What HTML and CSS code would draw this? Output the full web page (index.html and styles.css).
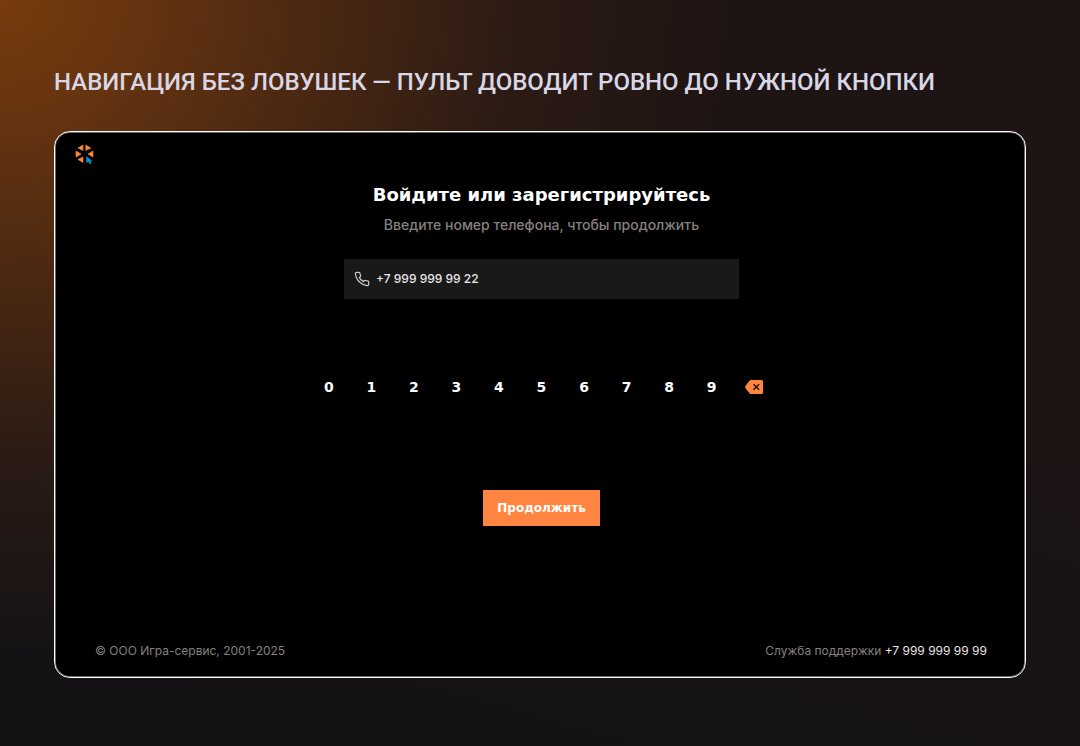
FILE: index.html
```html
<!DOCTYPE html>
<html lang="ru">
<head>
<meta charset="utf-8">
<meta name="viewport" content="width=device-width, initial-scale=1">
<title>Вход по номеру телефона</title>
<link rel="stylesheet" href="styles.css">
</head>
<body class="page">
<h1 class="page-title">Навигация без ловушек — пульт доводит ровно до нужной кнопки</h1>
<main class="screen">
  <header class="screen-header">
    <svg class="logo" viewBox="0 0 20 20" aria-hidden="true">
      <g fill="#ff8540" stroke="#ff8540" stroke-width=".6" stroke-linejoin="round">
        <path d="M3 4 8 1v5.500z"/>
        <path d="M10.800 1l5 3-5 2.500z"/>
        <path d="M1 7l5 3-5 3z"/>
        <path d="M18 7v6l-5-3z"/>
        <path d="M3 15.500 8 13V18.500z"/>
      </g>
      <path fill="#0793ca" d="M11.300 12 17.200 17l-1.700.500 1 2-1.900.500-.8-2-2.500.800z"/>
    </svg>
  </header>
  <form class="login">
    <h2 class="login-title">Войдите или зарегистрируйтесь</h2>
    <label class="login-hint" for="phone">Введите номер телефона, чтобы продолжить</label>
    <div class="phone-field">
      <svg class="phone-icon" viewBox="0 0 24 24" aria-hidden="true">
        <path d="M22 16.920v3a2 2 0 0 1-2.180 2 19.800 19.800 0 0 1-8.630-3.070 19.500 19.500 0 0 1-6-6A19.800 19.800 0 0 1 2.120 4.180 2 2 0 0 1 4.110 2h3a2 2 0 0 1 2 1.720c.13.960.36 1.900.7 2.810a2 2 0 0 1-.45 2.110L8.090 9.910a16 16 0 0 0 6 6l1.270-1.270a2 2 0 0 1 2.110-.45c.91.340 1.850.570 2.810.7A2 2 0 0 1 22 16.920z"/>
      </svg>
      <input class="phone-input" id="phone" type="tel" value="+7 999 999 99 22">
    </div>
    <div class="keypad">
      <button class="key" type="button">0</button>
      <button class="key" type="button">1</button>
      <button class="key" type="button">2</button>
      <button class="key" type="button">3</button>
      <button class="key" type="button">4</button>
      <button class="key" type="button">5</button>
      <button class="key" type="button">6</button>
      <button class="key" type="button">7</button>
      <button class="key" type="button">8</button>
      <button class="key" type="button">9</button>
      <button class="key" type="button" aria-label="Стереть">
        <svg class="erase-icon" viewBox="0 0 18 14" aria-hidden="true">
          <path fill="#ff8540" d="M6 0h10.500A1.500 1.500 0 0 1 18 1.500v11a1.500 1.500 0 0 1-1.500 1.500H6q-.8 0-1.300-.6L.4 8Q-.2 7 .4 6L4.700.6Q5.200 0 6 0z"/>
          <path stroke="#211008" stroke-width="1.400" d="m8.500 4.200 5.600 5.600m0-5.600L8.500 9.800"/>
        </svg>
      </button>
    </div>
    <button class="submit" type="submit">Продолжить</button>
  </form>
  <footer class="screen-footer">
    <span>© ООО Игра-сервис, 2001-2025</span>
    <span>Служба поддержки <a class="support-phone" href="tel:+79999999999">+7 999 999 99 99</a></span>
  </footer>
</main>
</body>
</html>
```
FILE: styles.css
```css
* {
  box-sizing: border-box;
}

.page {
  margin: 0;
  min-height: 100vh;
  padding: 64px 54px 68px;
  display: flex;
  flex-direction: column;
  gap: 31px;
  font-family: Inter, "Noto Sans", sans-serif;
  background:
    radial-gradient(ellipse 68% 88% at 0 0, #763c0e 0%, #643310 20%, #482712 45%, rgba(50, 30, 21, 0.7) 70%, rgba(30, 20, 19, 0) 100%),
    linear-gradient(15deg, #131214 0%, #171314 30%, #1e1413 65%, #1e1413 100%);
}

.page-title {
  margin: 0;
  font-family: Roboto, sans-serif;
  font-size: 24px;
  line-height: 36px;
  font-weight: 500;
  text-transform: uppercase;
  color: #d9d7e5;
}

.screen {
  flex: 1;
  display: flex;
  flex-direction: column;
  padding: 12px 20px 16px;
  border: 1px solid #fff;
  border-radius: 16px;
  box-shadow: inset 0 0 0 1px #666;
  background: #000;
}

.logo {
  display: block;
  width: 20px;
  height: 20px;
}

.login {
  flex: 1;
  display: flex;
  flex-direction: column;
  align-items: center;
  padding: 19px 0 0 3px;
}

.login-title {
  margin: 0;
  font: bold 18px/24px "DejaVu Sans", sans-serif;
  color: #fff;
}

.login-hint {
  margin-top: 8px;
  font-size: 14px;
  line-height: 20px;
  font-weight: 500;
  color: #85807e;
}

.phone-field {
  display: flex;
  align-items: center;
  gap: 6px;
  width: 395px;
  max-width: 100%;
  height: 40px;
  margin-top: 24px;
  padding: 0 10px;
  background: #191919;
}

.phone-icon {
  width: 16px;
  height: 16px;
  fill: none;
  stroke: #cfcbca;
  stroke-width: 1.8;
}

.phone-input {
  flex: 1;
  min-width: 0;
  padding: 0;
  border: 0;
  background: none;
  font: 500 12px/16px Inter, sans-serif;
  color: #e9e5e5;
}

.keypad {
  display: grid;
  grid-template-columns: repeat(11, 1fr);
  width: 468px;
  max-width: 100%;
  margin-top: 76px;
}

.key {
  display: flex;
  align-items: center;
  justify-content: center;
  height: 24px;
  padding: 0;
  border: 0;
  background: none;
  font: bold 14px/24px "DejaVu Sans", sans-serif;
  color: #fff;
}

.erase-icon {
  width: 18px;
  height: 14px;
}

.submit {
  height: 36px;
  margin-top: 91px;
  padding: 0 14px;
  border: 0;
  background: #ff8540;
  font: bold 12px/16px "DejaVu Sans", sans-serif;
  color: #fff;
}

.screen-footer {
  display: flex;
  flex-wrap: wrap;
  justify-content: space-between;
  padding: 0 18px 0 20px;
  font-size: 12px;
  line-height: 20px;
  color: #85807e;
}

.support-phone {
  color: #e9e5e5;
  text-decoration: none;
}
```
